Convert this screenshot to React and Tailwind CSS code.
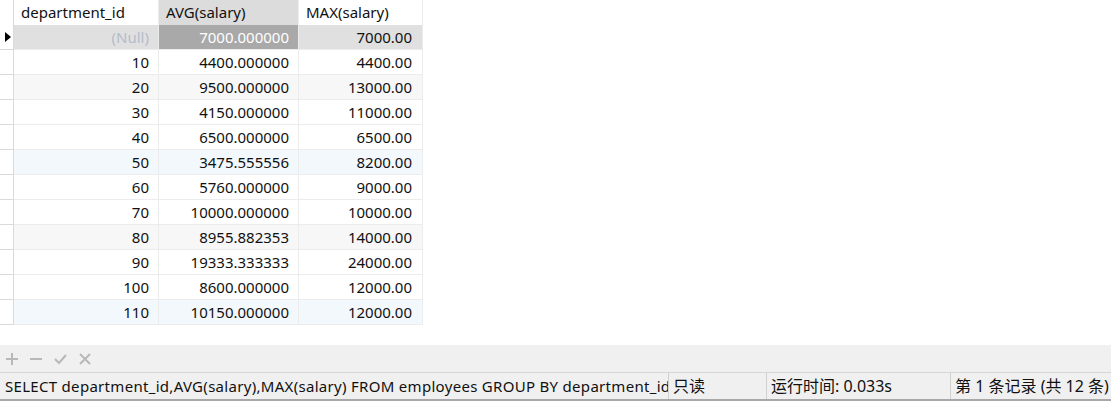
import React from "react";

const rows = [
  { id: null, avg: "7000.000000", max: "7000.00", tone: "sel" },
  { id: "10", avg: "4400.000000", max: "4400.00", tone: "" },
  { id: "20", avg: "9500.000000", max: "13000.00", tone: "gray" },
  { id: "30", avg: "4150.000000", max: "11000.00", tone: "" },
  { id: "40", avg: "6500.000000", max: "6500.00", tone: "" },
  { id: "50", avg: "3475.555556", max: "8200.00", tone: "blue" },
  { id: "60", avg: "5760.000000", max: "9000.00", tone: "" },
  { id: "70", avg: "10000.000000", max: "10000.00", tone: "" },
  { id: "80", avg: "8955.882353", max: "14000.00", tone: "gray" },
  { id: "90", avg: "19333.333333", max: "24000.00", tone: "" },
  { id: "100", avg: "8600.000000", max: "12000.00", tone: "" },
  { id: "110", avg: "10150.000000", max: "12000.00", tone: "blue" },
];

const rowBg = {
  sel: "bg-[#e0e0e0]",
  gray: "bg-[#f7f7f7]",
  blue: "bg-[#f3f8fd]",
  "": "bg-white",
};

const font = {
  fontFamily: '"Noto Sans", "Noto Sans CJK SC", sans-serif',
};

function Row({ row }) {
  const sel = row.tone === "sel";
  return (
    <div className={`flex h-[25px] ${rowBg[row.tone]}`}>
      <div className="w-[14px] h-full border-r border-b border-[#dadada] bg-white flex items-center pl-[5px]">
        {sel && (
          <svg width="6" height="10" viewBox="0 0 6 10">
            <path d="M0 0 L6 5 L0 10 Z" fill="#000" />
          </svg>
        )}
      </div>
      <div className="w-[145px] h-full border-r border-b border-[#ececec] flex items-center justify-end pr-[9px]">
        {row.id === null ? (
          <span className="text-[#b4bccc]">(Null)</span>
        ) : (
          row.id
        )}
      </div>
      <div
        className={`w-[140px] h-full border-r border-b border-[#ececec] flex items-center justify-end pr-[9px] ${
          sel ? "bg-[#a9a9a9] text-white" : ""
        }`}
      >
        {row.avg}
      </div>
      <div className="w-[124px] h-full border-r border-b border-[#ececec] flex items-center justify-end pr-[10px]">
        {row.max}
      </div>
    </div>
  );
}

export default function App() {
  return (
    <div
      className="w-[1111px] h-[401px] bg-white flex flex-col text-[15px] text-[#111] overflow-hidden"
      style={font}
    >
      <div className="flex-1">
        <div className="w-fit">
          <div className="flex h-[25px] bg-white">
            <div className="w-[14px] h-full border-r border-[#dadada]" />
            <div className="w-[145px] h-full border-r border-[#ececec] flex items-center pl-[7px]">
              department_id
            </div>
            <div className="w-[140px] h-full border-r border-[#ececec] bg-[#dcdcdc] flex items-center pl-[7px]">
              AVG(salary)
            </div>
            <div className="w-[124px] h-full border-r border-[#ececec] flex items-center pl-[7px]">
              MAX(salary)
            </div>
          </div>
          {rows.map((r, i) => (
            <Row key={i} row={r} />
          ))}
        </div>
      </div>

      <div className="h-[28px] bg-[#f0f0f0] border-b border-[#d6d6d6] flex items-center gap-[12px] pl-[6px]">
        <svg width="12" height="12" viewBox="0 0 12 12" stroke="#b8b8b8" strokeWidth="2">
          <path d="M6 0 V12 M0 6 H12" />
        </svg>
        <svg width="12" height="12" viewBox="0 0 12 12" stroke="#b8b8b8" strokeWidth="2">
          <path d="M0 6 H12" />
        </svg>
        <svg width="13" height="12" viewBox="0 0 13 12" stroke="#b8b8b8" strokeWidth="2" fill="none">
          <path d="M1 6 L5 10 L12 2" />
        </svg>
        <svg width="12" height="12" viewBox="0 0 12 12" stroke="#b8b8b8" strokeWidth="2">
          <path d="M1 1 L11 11 M11 1 L1 11" />
        </svg>
      </div>

      <div className="h-[28px] bg-[#f0f0f0] border-b-2 border-[#a8a8a8] flex items-center text-[16px] text-[#111]">
        <div className="w-[669px] shrink-0 h-full border-r border-[#d0d0d0] flex items-center pl-[5px] overflow-hidden whitespace-nowrap text-[15px] tracking-[0.3px]">
          SELECT department_id,AVG(salary),MAX(salary) FROM employees GROUP BY department_id
        </div>
        <div className="w-[98px] shrink-0 h-full border-r border-[#d0d0d0] flex items-center pl-[4px]">
          只读
        </div>
        <div className="w-[184px] shrink-0 h-full border-r border-[#d0d0d0] flex items-center pl-[4px]">
          运行时间: 0.033s
        </div>
        <div className="flex-1 min-w-0 h-full flex items-center pl-[4px] whitespace-nowrap overflow-hidden">
          第 1 条记录 (共 12 条)
        </div>
      </div>
    </div>
  );
}
